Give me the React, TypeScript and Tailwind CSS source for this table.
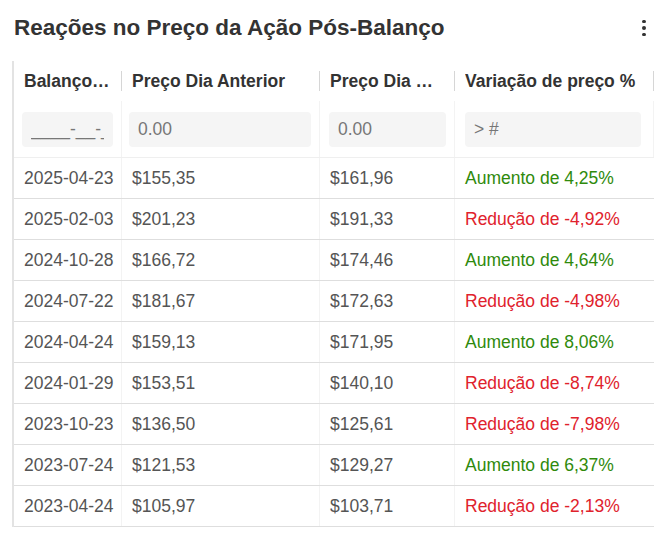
const rows = [
  { date: '2025-04-23', before: '$155,35', after: '$161,96', pct: 'Aumento de 4,25%', up: true },
  { date: '2025-02-03', before: '$201,23', after: '$191,33', pct: 'Redução de -4,92%', up: false },
  { date: '2024-10-28', before: '$166,72', after: '$174,46', pct: 'Aumento de 4,64%', up: true },
  { date: '2024-07-22', before: '$181,67', after: '$172,63', pct: 'Redução de -4,98%', up: false },
  { date: '2024-04-24', before: '$159,13', after: '$171,95', pct: 'Aumento de 8,06%', up: true },
  { date: '2024-01-29', before: '$153,51', after: '$140,10', pct: 'Redução de -8,74%', up: false },
  { date: '2023-10-23', before: '$136,50', after: '$125,61', pct: 'Redução de -7,98%', up: false },
  { date: '2023-07-24', before: '$121,53', after: '$129,27', pct: 'Aumento de 6,37%', up: true },
  { date: '2023-04-24', before: '$105,97', after: '$103,71', pct: 'Redução de -2,13%', up: false },
];

const cols = 'grid grid-cols-[108px_198px_135px_199px]';

function HeaderCell({ label, pr }: { label: string; pr: string }) {
  return (
    <div className="flex items-center h-full pl-[10px] relative min-w-0">
      <span className={`truncate ${pr} font-bold text-[#333]`}>{label}</span>
      <span className="absolute right-0 top-[10px] h-[20px] w-px bg-[#d6d6d6]" />
    </div>
  );
}

function FilterCell({ placeholder, pad }: { placeholder: string; pad: string }) {
  return (
    <div className={`h-full border-r border-[#f3f3f3] ${pad} py-[10px]`}>
      <input
        placeholder={placeholder}
        className="w-full h-[35px] rounded-[4px] bg-[#f5f5f5] px-[9px] text-[17.5px] placeholder:text-[#777] outline-none"
      />
    </div>
  );
}

export default function App() {
  return (
    <div className="w-[660px] h-[534px] bg-white overflow-hidden font-['Liberation_Sans',Arial,sans-serif] text-[17.5px]">
      <div className="flex items-center justify-between h-[61px] pl-[14px] pr-[11px] pb-[5px]">
        <h1 className="text-[22.5px] font-bold text-[#333]">Reações no Preço da Ação Pós-Balanço</h1>
        <div className="flex flex-col gap-[3px] items-center w-[10px]">
          <span className="w-[3.5px] h-[3.5px] rounded-full bg-[#333]" />
          <span className="w-[3.5px] h-[3.5px] rounded-full bg-[#333]" />
          <span className="w-[3.5px] h-[3.5px] rounded-full bg-[#333]" />
        </div>
      </div>

      <div className="ml-[12px] border-l-2 border-[#e3e3e3] w-[642px]">
        <div className={`${cols} h-[40px]`}>
          <HeaderCell label="Balanço Data" pr="pr-[10px]" />
          <HeaderCell label="Preço Dia Anterior" pr="pr-[10px]" />
          <HeaderCell label="Preço Dia Posterior" pr="pr-[20px]" />
          <HeaderCell label="Variação de preço %" pr="pr-[10px]" />
        </div>

        <div className={`${cols} h-[57px] border-b border-[#efefef]`}>
          <FilterCell placeholder="____-__-__" pad="pl-[8px] pr-[8px] pt-[11px]" />
          <FilterCell placeholder="0.00" pad="pl-[7px] pr-[8px] pt-[11px]" />
          <FilterCell placeholder="0.00" pad="pl-[9px] pr-[8px] pt-[11px]" />
          <FilterCell placeholder="> #" pad="pl-[10px] pr-[12px] pt-[11px]" />
        </div>

        {rows.map((r) => (
          <div key={r.date} className={`${cols} h-[41px] border-b border-[#dedede] text-[#555]`}>
            <div className="flex items-center pl-[10px] border-r border-[#f3f3f3]">{r.date}</div>
            <div className="flex items-center pl-[10px] border-r border-[#f3f3f3]">{r.before}</div>
            <div className="flex items-center pl-[10px] border-r border-[#f3f3f3]">{r.after}</div>
            <div className={`flex items-center pl-[10px] ${r.up ? 'text-[#2f8a0c]' : 'text-[#e0222c]'}`}>{r.pct}</div>
          </div>
        ))}
      </div>
    </div>
  );
}
